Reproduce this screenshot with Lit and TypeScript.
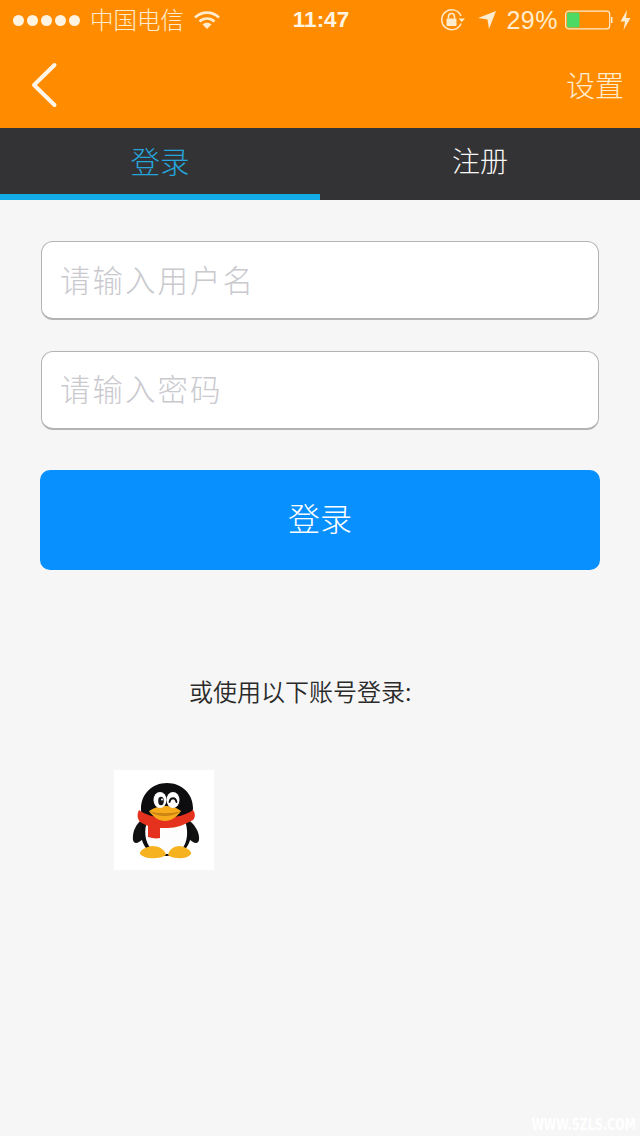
import { LitElement, html, css, svg } from "lit";
import { customElement } from "lit/decorators.js";

const penguin = svg`
<svg class="qq-svg" viewBox="0 0 100 100" width="100" height="100" aria-hidden="true">
  <path d="M30 48C22 53 18 62 19 70C20 75 25 73 29 69L36 60Z" fill="#111"/>
  <path d="M72 48C80 53 86 62 85 70C84 75 79 73 75 69L68 60Z" fill="#111"/>
  <path d="M53 13C38 13 27 24 27 39C27 44 28 48 30 51C26 58 26 68 30 75C34 83 43 86 52 86C61 86 70 83 74 75C78 68 78 58 74 51C77 47 79 43 79 38C79 24 68 13 53 13Z" fill="#0d0d10"/>
  <path d="M33 52C30 60 31 70 35 76C39 82 46 84 52 84C59 84 66 82 70 76C74 69 74 59 71 51C60 57 44 57 33 52Z" fill="#fdfdfd"/>
  <path d="M25 40C37 50 66 50 79 40C82 44 81 48 79 50C70 55 62 58 54 58L46 58C38 58 31 55 26 52C23 48 23 44 25 40Z" fill="#e5321f"/>
  <path d="M34 52L46 56L46 68C42 69 38 68 34 67Z" fill="#e5321f"/>
  <path d="M35 41C41 37 47 36 51 36C56 36 62 37 67 41C63 47 57 51 51 51C45 51 39 47 35 41Z" fill="#f7ab1c"/>
  <path d="M35 41C45 44 57 44 67 41C62 45 56 46 51 46C46 46 40 45 35 41Z" fill="#cc8414"/>
  <ellipse cx="46" cy="30" rx="6.500" ry="8" fill="#fff"/>
  <ellipse cx="59" cy="30" rx="6.500" ry="8" fill="#fff"/>
  <ellipse cx="47" cy="31" rx="2.800" ry="4.200" fill="#16161a"/>
  <circle cx="48" cy="29.500" r="1" fill="#fff"/>
  <path d="M55.500 32C56.500 27 61.500 27 62.500 32" fill="none" stroke="#111" stroke-width="1.800" stroke-linecap="round"/>
  <path d="M38 76C31 77 25 81 26 84C30 89 45 90 52 85C51 80 46 76 38 76Z" fill="#f7b21f"/>
  <path d="M66 76C72 77 78 81 77 84C74 89 60 90 54 85C55 80 59 76 66 76Z" fill="#f7b21f"/>
</svg>`;

@customElement("app-root")
export class AppRoot extends LitElement {
  static styles = css`
    :host {
      display: block;
      position: relative;
      width: 640px;
      height: 1136px;
      overflow: hidden;
      background: #f6f6f6;
      font-family: "Liberation Sans", "Noto Sans CJK SC", sans-serif;
    }
    .header { background: #ff8c00; color: #ffeccf; height: 128px; display: flex; flex-direction: column; }
    .status { height: 40px; display: grid; grid-template-columns: 1fr auto 1fr; align-items: center; font-size: 24px; padding: 0 9px 0 13px; box-sizing: border-box; }
    .left, .right { display: flex; align-items: center; }
    .right { justify-content: flex-end; }
    .dots { display: flex; gap: 3px; margin-right: 10px; }
    .dot { width: 11px; height: 11px; border-radius: 50%; background: #fff4e2; }
    .carrier { font-family: "Noto Sans CJK SC", sans-serif; font-size: 23.500px; font-weight: 300; line-height: 38px; margin-bottom: 2px; }
    .wifi { margin-left: 10px; }
    .time { font-weight: 700; font-size: 22.500px; color: #fff4e2; position: relative; left: -1px; }
    .pct { font-size: 25px; margin: 0 7px 0 9px; letter-spacing: 0.500px; }
    .nav { flex: 1; display: flex; align-items: center; justify-content: space-between; padding: 0 16px 0 30px; }
    .back { display: block; margin-top: 2px; }
    .setting { font-family: "Noto Sans CJK SC", sans-serif; font-weight: 300; font-size: 29px; color: #ffeccf; line-height: 40px; }
    .tabs { height: 72px; background: #333335; display: grid; grid-template-columns: 1fr 1fr; }
    .tab { display: flex; align-items: center; justify-content: center; box-sizing: border-box; padding-bottom: 6px; font-family: "Noto Sans CJK SC", sans-serif; font-weight: 300; font-size: 28px; color: #f8f8f8; border-bottom: 6px solid transparent; line-height: 1; }
    .tab.active { color: #25a5dc; border-bottom-color: #12ade8; font-size: 29.500px; }
    .tab span { position: relative; top: 2px; }
    .tab.active span { top: 3px; }
    .content { padding: 41px 40px 0; display: flex; flex-direction: column; }
    .field { height: 79px; margin: 0 1px; box-sizing: border-box; background: #fff; border: 1px solid #b3b3b3; border-bottom-width: 2px; border-radius: 12px; padding: 0 0 2px 18px; display: flex; align-items: center; font-family: "Noto Sans CJK SC", sans-serif; font-weight: 300; font-size: 30.500px; letter-spacing: 2px; color: #c9c9ce; }
    .field + .field { margin-top: 31px; padding-bottom: 4px; }
    .submit { margin-top: 40px; height: 100px; border: 0; border-radius: 10px; background: #0890ff; color: #fff; display: flex; align-items: center; justify-content: center; padding-bottom: 7px; box-sizing: border-box; font-family: "Noto Sans CJK SC", sans-serif; font-weight: 300; font-size: 32px; }
    .alt { margin: 105px 0 0 149px; font-family: "Noto Sans CJK SC", sans-serif; font-weight: 350; font-size: 24px; line-height: 32px; color: #2a2a2a; white-space: nowrap; }
    .qq { margin: 63px 0 0 74px; width: 100px; height: 100px; background: #fff; }
    .qq-svg { display: block; }
    .mark { position: absolute; right: 4px; bottom: 3px; font-family: "DejaVu Sans Condensed", "DejaVu Sans", sans-serif; font-weight: 700; font-size: 15px; line-height: 16px; color: #fff; transform: scaleX(0.83); transform-origin: right center; white-space: nowrap; }
  `;

  render() {
    return html`
      <div class="header">
        <div class="status">
          <div class="left">
            <div class="dots">
              <i class="dot"></i><i class="dot"></i><i class="dot"></i><i class="dot"></i><i class="dot"></i>
            </div>
            <span class="carrier">中国电信</span>
            <svg class="wifi" width="26" height="20" viewBox="0 0 26 20" aria-hidden="true">
              <path d="M1 7.500C8 1 18 1 25 7.500" fill="none" stroke="#ffeccf" stroke-width="2.600"/>
              <path d="M5.500 11.500C10 7.500 16 7.500 20.500 11.500" fill="none" stroke="#ffeccf" stroke-width="2.600"/>
              <path d="M8.500 14.500C11 12 15 12 17.500 14.500L13 19Z" fill="#ffeccf"/>
            </svg>
          </div>
          <div class="time">11:47</div>
          <div class="right">
            <svg width="26" height="24" viewBox="0 0 26 24" aria-hidden="true">
              <path d="M21 15.500A10 10 0 1 1 21 8" fill="none" stroke="#ffeccf" stroke-width="1.500"/>
              <path d="M18.500 10.500H25L21.800 14Z" fill="#ffeccf"/>
              <rect x="6.500" y="10.500" width="10" height="7.500" rx="1" fill="#ffeccf"/>
              <path d="M8.500 10.500V8.500A3 3 0 0 1 14.500 8.500V10.500" fill="none" stroke="#ffeccf" stroke-width="1.600"/>
            </svg>
            <svg style="margin-left:11px" width="20" height="20" viewBox="0 0 20 20" aria-hidden="true">
              <path d="M19 1L12 19L10.500 9.500L1 8Z" fill="#ffeccf"/>
            </svg>
            <span class="pct">29%</span>
            <svg width="48" height="20" viewBox="0 0 48 20" aria-hidden="true">
              <rect x="0.700" y="1.200" width="44" height="17.600" rx="3" fill="none" stroke="#ffeccf" stroke-width="1.200"/>
              <rect x="2" y="2.500" width="12.500" height="15" rx="1.500" fill="#4cd964"/>
              <path d="M46 7H47.500V13H46Z" fill="#ffeccf"/>
            </svg>
            <svg style="margin-left:7px" width="11" height="20" viewBox="0 0 11 20" aria-hidden="true">
              <path d="M7 0L0.500 11.500H5L3.500 20L10.500 8H6Z" fill="#ffeccf"/>
            </svg>
          </div>
        </div>
        <div class="nav">
          <svg class="back" width="28" height="46" viewBox="0 0 28 46" aria-hidden="true">
            <path d="M24.500 3L4 23L24.500 43" fill="none" stroke="#fff6e8" stroke-width="4" stroke-linecap="round" stroke-linejoin="round"/>
          </svg>
          <span class="setting">设置</span>
        </div>
      </div>
      <div class="tabs">
        <div class="tab active"><span>登录</span></div>
        <div class="tab"><span>注册</span></div>
      </div>
      <div class="content">
        <div class="field">请输入用户名</div>
        <div class="field">请输入密码</div>
        <div class="submit">登录</div>
        <div class="alt">或使用以下账号登录:</div>
        <div class="qq">${penguin}</div>
      </div>
      <div class="mark">WWW.5ZLS.COM</div>
    `;
  }
}
